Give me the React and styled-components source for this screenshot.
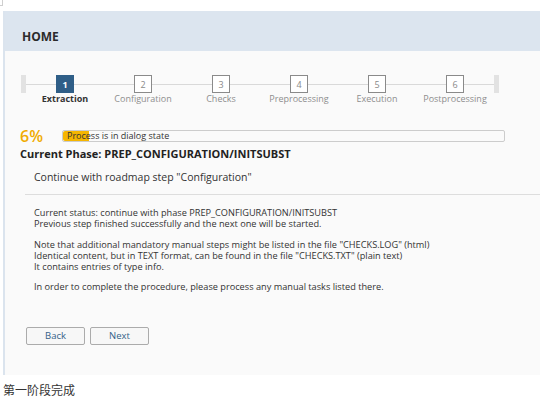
import React from "react";
import styled, { createGlobalStyle } from "styled-components";

const Global = createGlobalStyle`
  html, body { margin: 0; padding: 0; background: #fff; }
  body { font-family: "Open Sans", "Liberation Sans", sans-serif; color: #333; }
  * { box-sizing: border-box; }
`;

const Page = styled.div`
  width: 540px;
  height: 410px;
  overflow: hidden;
  background: #fff;
`;

const TopStrip = styled.div`
  height: 11px;
`;

const CornerMark = styled.div`
  width: 3px;
  height: 6px;
  border-right: 1px solid #cfcfcf;
  border-bottom: 1px solid #cfcfcf;
`;

const Panel = styled.div`
  margin-left: 3px;
  border-left: 2px solid #dbe4ee;
  display: flex;
  flex-direction: column;
`;

const Header = styled.div`
  height: 40px;
  background: #dce5ef;
  display: flex;
  align-items: center;
  padding-left: 17px;
  padding-top: 10px;
  font-size: 12px;
  font-weight: 700;
  color: #2b2b2b;
`;

const Content = styled.div`
  height: 324px;
  background: #fafafa;
  padding: 24px 0 0 15px;
  display: flex;
  flex-direction: column;
`;

const Roadmap = styled.div`
  position: relative;
  display: flex;
  margin-left: 1px;
  width: 478px;
  &::before {
    content: "";
    position: absolute;
    left: 5px;
    right: 5px;
    top: 9px;
    height: 1px;
    background: #d9d9d9;
  }
`;

const EndBar = styled.div`
  width: 5px;
  height: 18px;
  background: #e2e2e2;
  position: relative;
`;

const Step = styled.div`
  width: 78px;
  display: flex;
  flex-direction: column;
  align-items: center;
  position: relative;
`;

const StepBox = styled.div`
  width: 18px;
  height: 18px;
  display: flex;
  align-items: center;
  justify-content: center;
  font-size: 9px;
  font-weight: ${(p) => (p.$active ? 700 : 400)};
  background: ${(p) => (p.$active ? "#2f5e87" : "#fff")};
  color: ${(p) => (p.$active ? "#fff" : "#8a8a8a")};
  border: 1px solid ${(p) => (p.$active ? "#2f5e87" : "#8a8a8a")};
`;

const StepLabel = styled.div`
  font-size: 9px;
  line-height: 12px;
  white-space: nowrap;
  font-weight: ${(p) => (p.$active ? 700 : 400)};
  color: ${(p) => (p.$active ? "#333" : "#8e8e8e")};
`;

const ProgressRow = styled.div`
  margin-top: 22px;
  display: flex;
  align-items: center;
  height: 18px;
`;

const Percent = styled.div`
  width: 42px;
  font-size: 16px;
  font-weight: 600;
  color: #f0ab00;
`;

const Bar = styled.div`
  position: relative;
  width: 443px;
  height: 12px;
  border: 1px solid #cccccc;
  border-radius: 2px;
  background: #fafafa;
  overflow: hidden;
`;

const Fill = styled.div`
  position: absolute;
  left: 0;
  top: 0;
  bottom: 0;
  background: #f6b600;
  border-radius: 2px 0 0 2px;
`;

const BarText = styled.div`
  position: relative;
  padding-left: 4px;
  font-size: 9px;
  line-height: 10px;
  color: #333;
`;

const Phase = styled.div`
  margin-top: 1px;
  font-size: 11px;
  font-weight: 700;
  color: #222;
`;

const StepTitle = styled.div`
  margin-top: 9px;
  margin-left: 5px;
  padding-left: 9px;
  font-size: 10.5px;
  color: #333;
  padding-bottom: 10px;
  border-bottom: 1px solid #dddddd;
`;

const Body = styled.div`
  padding: 12px 0 0 14px;
  font-size: 9.2px;
  line-height: 11.3px;
  color: #333;
`;

const Para = styled.p`
  margin: 0 0 9px 0;
`;

const Buttons = styled.div`
  display: flex;
  gap: 5px;
  margin-top: 25px;
  padding-left: 6px;
`;

const Button = styled.button`
  width: 59px;
  height: 18px;
  border: 1px solid #ababab;
  border-radius: 2px;
  background: #f7f7f7;
  color: #346187;
  font-family: "Open Sans", "Liberation Sans", sans-serif;
  font-size: 9.5px;
  padding: 0;
`;

const Footer = styled.div`
  padding: 6px 0 0 3px;
  font-family: "Noto Sans CJK SC", sans-serif;
  font-size: 12px;
  color: #333;
`;

const steps = ["Extraction", "Configuration", "Checks", "Preprocessing", "Execution", "Postprocessing"];

export default function App() {
  return (
    <Page>
      <Global />
      <TopStrip>
        <CornerMark />
      </TopStrip>
      <Panel>
        <Header>HOME</Header>
        <Content>
          <Roadmap>
            <EndBar />
            {steps.map((s, i) => (
              <Step key={s}>
                <StepBox $active={i === 0}>{i + 1}</StepBox>
                <StepLabel $active={i === 0}>{s}</StepLabel>
              </Step>
            ))}
            <EndBar />
          </Roadmap>
          <ProgressRow>
            <Percent>6%</Percent>
            <Bar>
              <Fill style={{ width: "6%" }} />
              <BarText>Process is in dialog state</BarText>
            </Bar>
          </ProgressRow>
          <Phase>Current Phase: PREP_CONFIGURATION/INITSUBST</Phase>
          <StepTitle>Continue with roadmap step "Configuration"</StepTitle>
          <Body>
            <Para>
              Current status: continue with phase PREP_CONFIGURATION/INITSUBST
              <br />
              Previous step finished successfully and the next one will be started.
            </Para>
            <Para>
              Note that additional mandatory manual steps might be listed in the file "CHECKS.LOG" (html)
              <br />
              Identical content, but in TEXT format, can be found in the file "CHECKS.TXT" (plain text)
              <br />
              It contains entries of type info.
            </Para>
            <Para>In order to complete the procedure, please process any manual tasks listed there.</Para>
          </Body>
          <Buttons>
            <Button>Back</Button>
            <Button>Next</Button>
          </Buttons>
        </Content>
      </Panel>
      <Footer>第一阶段完成</Footer>
    </Page>
  );
}
